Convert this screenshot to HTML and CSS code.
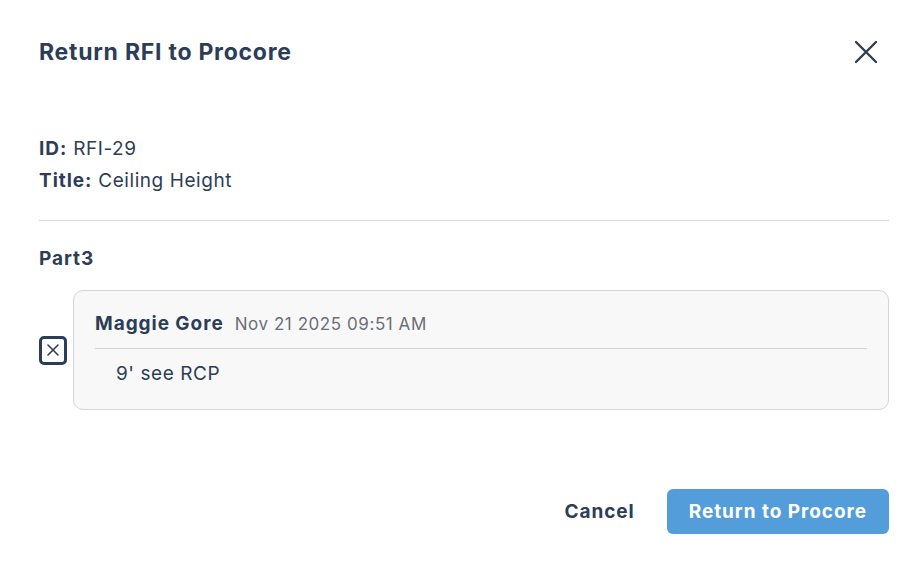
FILE: index.html
```html
<!DOCTYPE html>
<html lang="en">
<head>
<meta charset="utf-8">
<title>Return RFI to Procore</title>
<link rel="stylesheet" href="styles.css">
</head>
<body>
<div class="dialog">
  <header class="dialog-header">
    <h1 class="dialog-title">Return RFI to Procore</h1>
    <button class="close-btn" aria-label="Close">
      <svg width="24" height="24" viewBox="0 0 24 24" fill="none" stroke="#2c3e57" stroke-width="2.4" stroke-linecap="round"><path d="M2 2L22 22M22 2L2 22"/></svg>
    </button>
  </header>

  <section class="meta">
    <div class="meta-line"><strong>ID:</strong> RFI-29</div>
    <div class="meta-line"><strong>Title:</strong> Ceiling Height</div>
  </section>

  <hr class="divider">

  <h2 class="part-title">Part3</h2>

  <div class="response-row">
    <span class="checkbox">
      <svg width="14" height="14" viewBox="0 0 14 14" fill="none" stroke="#2c3e57" stroke-width="1.6" stroke-linecap="round"><path d="M2 2L12 12M12 2L2 12"/></svg>
    </span>
    <div class="card">
      <div class="card-head">
        <span class="author">Maggie Gore</span>
        <span class="date">Nov 21 2025 09:51 AM</span>
      </div>
      <div class="card-body">9' see RCP</div>
    </div>
  </div>

  <footer class="actions">
    <button class="btn-cancel">Cancel</button>
    <button class="btn-primary">Return to Procore</button>
  </footer>
</div>
</body>
</html>
```

FILE: styles.css
```css
* { box-sizing: border-box; }
html, body { margin: 0; padding: 0; background: #ffffff; }
body {
  font-family: Inter, "Noto Sans", "Liberation Sans", sans-serif;
  color: #2c3e57;
  letter-spacing: 0.035em;
}
strong, .author, .part-title, .btn-cancel, .btn-primary {
  letter-spacing: 0.05em;
}
.dialog {
  width: 922px;
  height: 568px;
  padding: 38px 33px 0 39px;
}
.dialog-header {
  display: flex;
  align-items: center;
  justify-content: space-between;
  height: 28px;
}
.dialog-title {
  margin: 0;
  font-size: 23px;
  line-height: 28px;
  font-weight: 700;
  letter-spacing: 0.033em;
}
.close-btn {
  border: 0;
  background: none;
  padding: 0;
  margin-right: 11px;
  width: 24px;
  height: 24px;
  cursor: pointer;
  display: flex;
}
.meta {
  margin-top: 67px;
}
.meta-line {
  font-size: 19px;
  line-height: 32px;
}
.meta-line strong { font-weight: 700; }
.divider {
  margin: 23px 0 0;
  border: 0;
  border-top: 1px solid #d9d9d9;
  height: 0;
}
.part-title {
  margin: 24px 0 0;
  font-size: 19px;
  line-height: 28px;
  font-weight: 700;
}
.response-row {
  margin-top: 17px;
  display: flex;
  align-items: center;
  gap: 6px;
}
.checkbox {
  flex: none;
  width: 28px;
  height: 29px;
  border: 3px solid #2c3e57;
  border-radius: 5px;
  display: flex;
  align-items: center;
  justify-content: center;
  background: #fff;
}
.card {
  flex: 1;
  background: #f8f8f8;
  border: 1px solid #d6d6d6;
  border-radius: 10px;
  padding: 21px 21px 23px;
}
.card-head {
  display: flex;
  align-items: baseline;
  gap: 11px;
  line-height: 24px;
  padding-bottom: 12px;
  border-bottom: 1px solid #d4d4d4;
}
.author {
  font-size: 19px;
  font-weight: 700;
}
.date {
  font-size: 17px;
  color: #6b7078;
}
.card-body {
  margin-top: 13px;
  padding-left: 21px;
  font-size: 19px;
  line-height: 24px;
}
.actions {
  margin-top: 79px;
  display: flex;
  justify-content: flex-end;
  align-items: center;
  gap: 32px;
}
.btn-cancel {
  border: 0;
  background: none;
  padding: 0;
  font-family: inherit;
  font-size: 19px;
  font-weight: 700;
  color: #2c3e57;
  cursor: pointer;
}
.btn-primary {
  border: 0;
  background: #539dda;
  color: #fff;
  font-family: inherit;
  font-size: 19px;
  font-weight: 700;
  height: 45px;
  padding: 0 22px;
  border-radius: 6px;
  cursor: pointer;
}
```
